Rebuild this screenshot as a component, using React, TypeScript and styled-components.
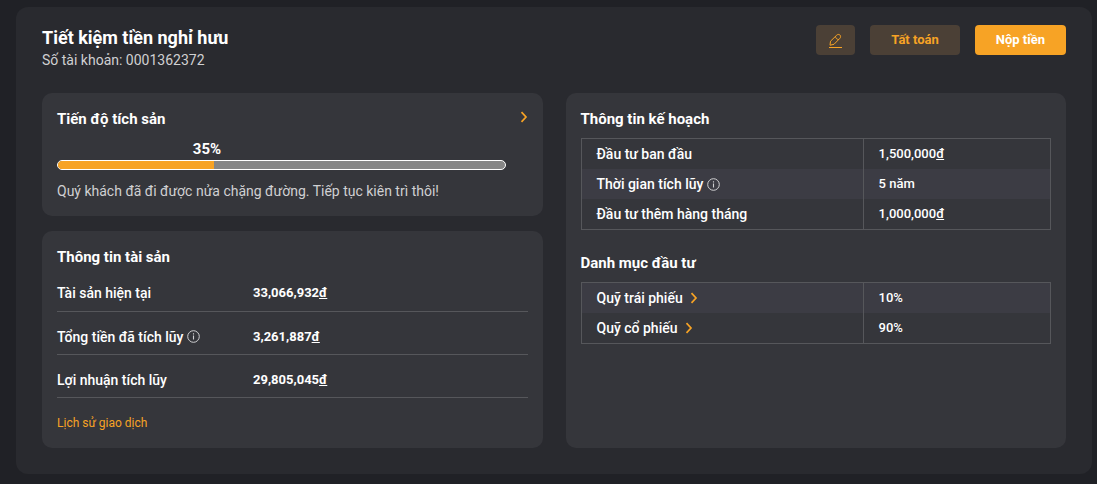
import React from "react";
import styled, { createGlobalStyle } from "styled-components";

const GlobalStyle = createGlobalStyle`
  *, *::before, *::after { box-sizing: border-box; }
  body {
    margin: 0;
    background: #202126;
    color: #ffffff;
    font-family: Roboto, "Noto Sans", sans-serif;
    font-size: 14px;
    line-height: 20px;
  }
`;

const Page = styled.div`
  padding: 7px 5px 10px 16px;
`;

const Panel = styled.main`
  padding: 18px 26px 26px;
  border-radius: 12px;
  background: #292a2f;
`;

const Header = styled.header`
  display: flex;
  justify-content: space-between;
  align-items: flex-start;
  margin-bottom: 23px;
`;

const AccountTitle = styled.h1`
  margin: 0;
  font-size: 18px;
  line-height: 25px;
  font-weight: 700;
`;

const AccountNumber = styled.p`
  margin: 0;
  color: #d0d0d2;
`;

const Actions = styled.div`
  display: flex;
  gap: 15px;
`;

const Button = styled.button<{ $primary?: boolean }>`
  display: flex;
  align-items: center;
  justify-content: center;
  height: 30px;
  padding: 0 21px;
  border: 0;
  border-radius: 4px;
  background: ${(p) => (p.$primary ? "#f7a325" : "#4b4036")};
  color: ${(p) => (p.$primary ? "#ffffff" : "#f7a325")};
  font: inherit;
  font-size: 13px;
  font-weight: 700;
  cursor: pointer;
`;

const IconButton = styled(Button)`
  padding: 0 12px;
`;

const Columns = styled.div`
  display: grid;
  grid-template-columns: 1fr 1fr;
  gap: 23px;
`;

const Stack = styled.div`
  display: flex;
  flex-direction: column;
  gap: 15px;
`;

const Card = styled.section`
  padding: 15px;
  border-radius: 10px;
  background: #35363b;
`;

const CardHeader = styled.div`
  display: flex;
  justify-content: space-between;
  align-items: flex-start;
`;

const CardTitle = styled.h2`
  margin: 0;
  font-size: 15px;
  line-height: 22px;
  font-weight: 700;
`;

const ArrowLink = styled.a`
  display: inline-flex;
  color: #f7a325;
`;

const CardArrow = styled(ArrowLink)`
  padding-top: 3px;
`;

const Progress = styled.div`
  margin: 9px 22px 11px 0;
`;

const ProgressLabel = styled.div`
  width: 100px;
  margin-left: -57px;
  font-size: 15px;
  line-height: 20px;
  font-weight: 700;
  text-align: center;
`;

const ProgressOffset = styled.div`
  display: flex;
  margin-bottom: 1px;
`;

const Track = styled.div`
  height: 10px;
  overflow: hidden;
  border: 1px solid #ffffff;
  border-radius: 5px;
  background: #868686;
`;

const Fill = styled.div`
  height: 100%;
  background: #f7a325;
`;

const Note = styled.p`
  margin: 0;
  color: #d0d0d2;
`;

const AssetTable = styled.table`
  width: 100%;
  border-collapse: collapse;
  table-layout: fixed;

  th, td {
    height: 43px;
    padding: 8px 0 0;
    border-bottom: 1px solid #56575b;
    text-align: left;
  }
  th { width: 196px; font-weight: 500; }
  td { font-size: 13px; font-weight: 700; }
`;

const HistoryLink = styled.a`
  display: block;
  width: fit-content;
  margin-top: 15px;
  color: #f7a325;
  font-size: 12px;
  line-height: 20px;
  text-decoration: none;
`;

const PlanTable = styled.table<{ $striped: "odd" | "even" }>`
  width: 100%;
  margin-top: 8px;
  border: 1px solid #56575b;
  border-spacing: 0;
  table-layout: fixed;

  th, td {
    height: 30px;
    padding: 0 15px;
    text-align: left;
    font-weight: 500;
  }
  th { width: 60%; }
  td { border-left: 1px solid #56575b; font-size: 13px; }
  tr:nth-child(${(p) => p.$striped}) { background: #3c3c44; }

  & + h2 { margin-top: 22px; }
`;

const Label = styled.span<{ $gap: number }>`
  display: inline-flex;
  align-items: center;
  gap: ${(p) => p.$gap}px;
`;

const Chevron = () => (
  <svg width="8" height="12" viewBox="0 0 8 12" fill="none" stroke="currentColor" strokeWidth="1.7" aria-hidden="true">
    <path d="M1.5 1.2 L6 6 L1.5 10.8" />
  </svg>
);

const Info = () => (
  <svg width="13" height="13" viewBox="0 0 13 13" fill="none" stroke="#d0d0d2" role="img" aria-label="Thông tin">
    <circle cx="6.5" cy="6.5" r="5.8" strokeWidth="1" />
    <path d="M6.5 5.6 V9.6 M6.5 3.3 V4.5" strokeWidth="1.1" />
  </svg>
);

const Pencil = () => (
  <svg width="15" height="18" viewBox="0 0 15 18" fill="none" stroke="currentColor" strokeWidth="1" strokeLinejoin="round" aria-hidden="true">
    <path d="M2 14.2 L2.5 10.2 L8.7 4.2 C9.7 3.2 11 3.2 11.9 4 C12.8 4.9 12.8 6.3 11.9 7.3 L6 13.3 Z" />
    <path d="M7.5 5.4 C7.7 7.2 8.8 8.4 10.7 8.5" />
    <path d="M1 16.5 H14" />
  </svg>
);

const Money = ({ amount }: { amount: string }) => (
  <>
    {amount}
    <u>đ</u>
  </>
);

const assets = [
  { label: "Tài sản hiện tại", amount: "33,066,932" },
  { label: "Tổng tiền đã tích lũy", amount: "3,261,887", info: true },
  { label: "Lợi nhuận tích lũy", amount: "29,805,045" },
];

const funds = [
  { name: "Quỹ trái phiếu", share: "10%" },
  { name: "Quỹ cổ phiếu", share: "90%" },
];

const percent = 35;

export default function App() {
  return (
    <>
      <GlobalStyle />
      <Page>
        <Panel>
          <Header>
            <div>
              <AccountTitle>Tiết kiệm tiền nghỉ hưu</AccountTitle>
              <AccountNumber>Số tài khoản: 0001362372</AccountNumber>
            </div>
            <Actions>
              <IconButton type="button" aria-label="Chỉnh sửa"><Pencil /></IconButton>
              <Button type="button">Tất toán</Button>
              <Button type="button" $primary>Nộp tiền</Button>
            </Actions>
          </Header>
          <Columns>
            <Stack>
              <Card>
                <CardHeader>
                  <CardTitle>Tiến độ tích sản</CardTitle>
                  <CardArrow href="#progress" aria-label="Tiến độ tích sản"><Chevron /></CardArrow>
                </CardHeader>
                <Progress>
                  <ProgressOffset style={{ paddingLeft: `${percent}%` }}>
                    <ProgressLabel>{percent}%</ProgressLabel>
                  </ProgressOffset>
                  <Track role="progressbar" aria-valuenow={percent} aria-valuemin={0} aria-valuemax={100} aria-label="Tiến độ tích sản">
                    <Fill style={{ width: `${percent}%` }} />
                  </Track>
                </Progress>
                <Note>Quý khách đã đi được nửa chặng đường. Tiếp tục kiên trì thôi!</Note>
              </Card>
              <Card>
                <CardTitle>Thông tin tài sản</CardTitle>
                <AssetTable>
                  <tbody>
                    {assets.map((a) => (
                      <tr key={a.label}>
                        <th scope="row"><Label $gap={4}>{a.label}{a.info && <Info />}</Label></th>
                        <td><Money amount={a.amount} /></td>
                      </tr>
                    ))}
                  </tbody>
                </AssetTable>
                <HistoryLink href="#history">Lịch sử giao dịch</HistoryLink>
              </Card>
            </Stack>
            <Card>
              <CardTitle>Thông tin kế hoạch</CardTitle>
              <PlanTable $striped="even">
                <tbody>
                  <tr><th scope="row">Đầu tư ban đầu</th><td><Money amount="1,500,000" /></td></tr>
                  <tr><th scope="row"><Label $gap={4}>Thời gian tích lũy<Info /></Label></th><td>5 năm</td></tr>
                  <tr><th scope="row">Đầu tư thêm hàng tháng</th><td><Money amount="1,000,000" /></td></tr>
                </tbody>
              </PlanTable>
              <CardTitle>Danh mục đầu tư</CardTitle>
              <PlanTable $striped="odd">
                <tbody>
                  {funds.map((f) => (
                    <tr key={f.name}>
                      <th scope="row">
                        <Label $gap={7}>{f.name}<ArrowLink href="#fund" aria-label={f.name}><Chevron /></ArrowLink></Label>
                      </th>
                      <td>{f.share}</td>
                    </tr>
                  ))}
                </tbody>
              </PlanTable>
            </Card>
          </Columns>
        </Panel>
      </Page>
    </>
  );
}
